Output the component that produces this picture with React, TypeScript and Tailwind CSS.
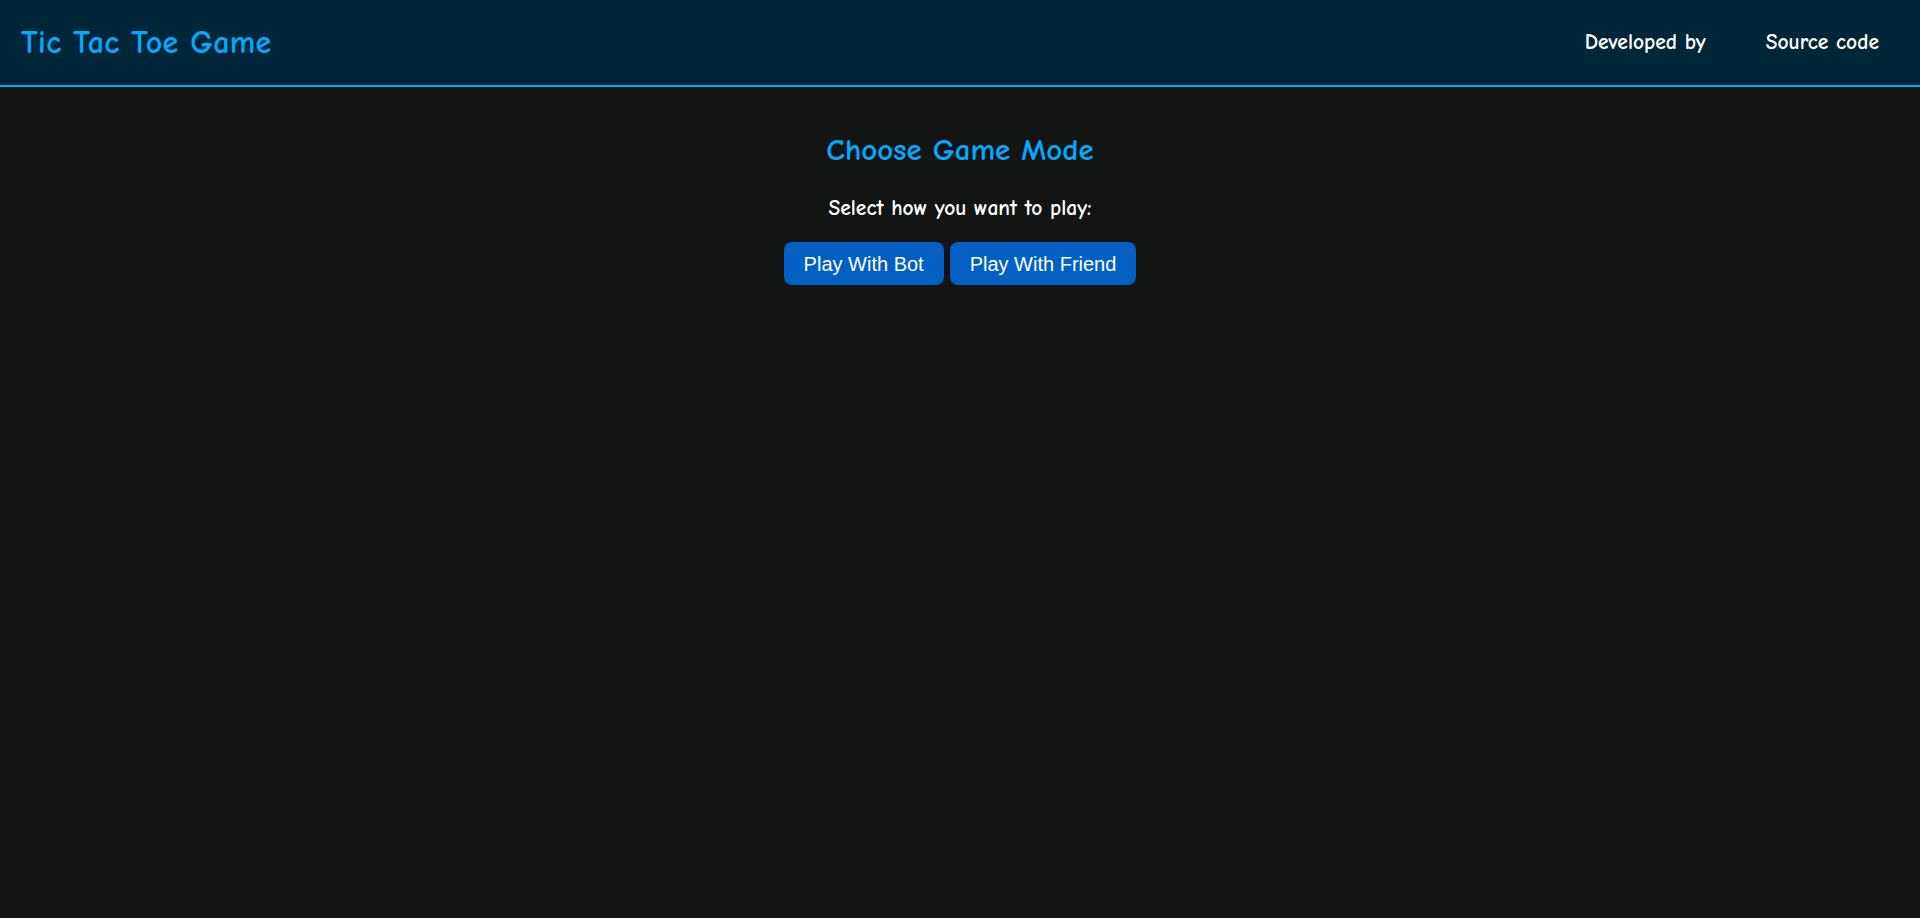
import React from 'react';

const comic = { fontFamily: '"Comic Sans MS", "Comic Neue", "DejaVu Sans", sans-serif' };

export default function App() {
  return (
    <div className="min-h-[918px] bg-[#131514]" style={comic}>
      {/* Top bar */}
      <header className="h-[87px] bg-[#01263a] border-b-2 border-[#00aaff] flex items-center justify-between pl-[21px] pr-[41px]">
        <h1 className="text-[32px] font-bold text-[#00aaff] leading-none tracking-[0.3px]">Tic Tac Toe Game</h1>
        <nav className="flex items-center gap-[60px] text-[21.5px] font-bold text-white">
          <a href="#">Developed by</a>
          <a href="#">Source code</a>
        </nav>
      </header>

      {/* Game mode picker */}
      <main className="flex flex-col items-center pt-[44px]">
        <h2 className="text-[31px] font-bold text-[#00aaff] leading-[38px]">Choose Game Mode</h2>
        <p className="mt-[26px] text-[21.5px] font-bold text-white leading-[26px]">Select how you want to play:</p>
        <div className="mt-[21px] flex gap-[6px]" style={{ fontFamily: '"Liberation Sans", Arial, sans-serif' }}>
          <button className="h-[43px] px-[20px] rounded-[8px] bg-[#035fc4] text-white text-[20px]">Play With Bot</button>
          <button className="h-[43px] px-[20px] rounded-[8px] bg-[#035fc4] text-white text-[20px]">Play With Friend</button>
        </div>
      </main>
    </div>
  );
}
